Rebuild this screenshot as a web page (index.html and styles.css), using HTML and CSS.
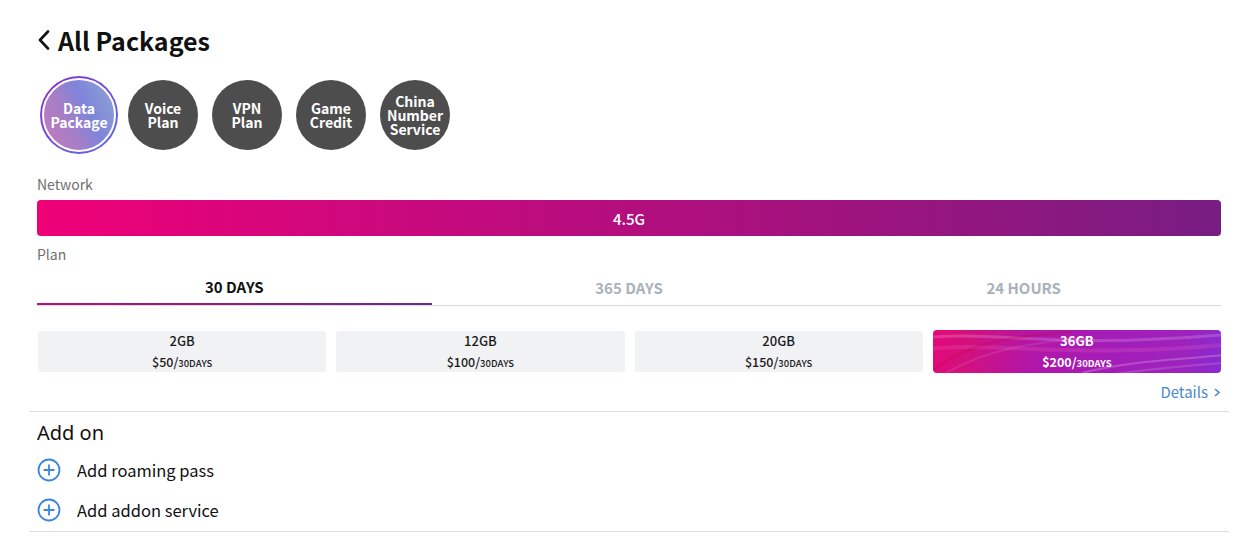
FILE: index.html
```html
<!DOCTYPE html>
<html lang="en">
<head>
<meta charset="utf-8">
<title>All Packages</title>
<link rel="stylesheet" href="styles.css">
</head>
<body>
<div class="page">
  <div class="inner">
    <h1 class="title">
      <svg class="back" width="12" height="20" viewBox="0 0 12 20"><polyline points="10,1.5 2,10 10,18.5" fill="none" stroke="#111" stroke-width="2.6" stroke-linecap="round" stroke-linejoin="round"/></svg>
      <span>All Packages</span>
    </h1>
    <div class="cats">
      <div class="cat active"><div class="cat-in">Data<br>Package</div></div>
      <div class="cat"><div class="cat-in">Voice<br>Plan</div></div>
      <div class="cat"><div class="cat-in">VPN<br>Plan</div></div>
      <div class="cat"><div class="cat-in">Game<br>Credit</div></div>
      <div class="cat"><div class="cat-in">China<br>Number<br>Service</div></div>
    </div>
    <div class="label net-label">Network</div>
    <div class="network">4.5G</div>
    <div class="label plan-label">Plan</div>
    <div class="tabs">
      <div class="tab active">30 DAYS</div>
      <div class="tab">365 DAYS</div>
      <div class="tab">24 HOURS</div>
    </div>
    <div class="plans">
      <div class="plan"><div class="gb">2GB</div><div class="price">$50/<small>30DAYS</small></div></div>
      <div class="plan"><div class="gb">12GB</div><div class="price">$100/<small>30DAYS</small></div></div>
      <div class="plan"><div class="gb">20GB</div><div class="price">$150/<small>30DAYS</small></div></div>
      <div class="plan selected">
        <svg class="waves" viewBox="0 0 290 43" preserveAspectRatio="none">
          <path d="M-10,8 C60,0 120,20 300,4" stroke="rgba(255,255,255,0.18)" stroke-width="3" fill="none"/>
          <path d="M-10,20 C50,10 140,30 300,14" stroke="rgba(255,120,200,0.18)" stroke-width="4" fill="none"/>
          <path d="M0,40 C40,10 90,5 140,2" stroke="rgba(200,0,60,0.25)" stroke-width="3" fill="none"/>
          <path d="M10,45 C50,20 100,12 160,8" stroke="rgba(255,255,255,0.1)" stroke-width="2" fill="none"/>
          <path d="M150,43 C200,30 250,30 300,24" stroke="rgba(255,255,255,0.22)" stroke-width="2" fill="none"/>
          <path d="M170,46 C220,38 260,36 300,32" stroke="rgba(255,255,255,0.15)" stroke-width="2" fill="none"/>
        </svg>
        <div class="gb">36GB</div><div class="price">$200/<small>30DAYS</small></div>
      </div>
    </div>
    <div class="details-row"><a class="details" href="#">Details <svg width="8" height="11" viewBox="0 0 8 11"><polyline points="2,2 6,5.5 2,9" fill="none" stroke="#4a88d0" stroke-width="1.6"/></svg></a></div>
  </div>
  <div class="addon">
    <div class="addon-title">Add on</div>
    <div class="addon-item">
      <svg width="24" height="24" viewBox="0 0 24 24"><circle cx="12" cy="12" r="10.5" fill="none" stroke="#3b86e0" stroke-width="1.8"/><path d="M12 6.5v11M6.5 12h11" stroke="#3b86e0" stroke-width="1.8"/></svg>
      <span>Add roaming pass</span>
    </div>
    <div class="addon-item">
      <svg width="24" height="24" viewBox="0 0 24 24"><circle cx="12" cy="12" r="10.5" fill="none" stroke="#3b86e0" stroke-width="1.8"/><path d="M12 6.5v11M6.5 12h11" stroke="#3b86e0" stroke-width="1.8"/></svg>
      <span>Add addon service</span>
    </div>
  </div>
</div>
</body>
</html>
```
FILE: styles.css
```css
* { box-sizing: border-box; }
html, body { margin: 0; padding: 0; background: #fff; }
body {
  font-family: "Noto Sans CJK SC", "Noto Sans", sans-serif;
  color: #111;
}
.page {
  margin-left: 30px;
  width: 1199px;
}
.inner {
  padding: 0 8px 0 7px;
  border-bottom: 1px solid #dcdcdc;
}
.title {
  margin: 0;
  padding-top: 20px;
  height: 60px;
  display: flex;
  align-items: center;
  font-size: 25px;
  font-weight: 700;
  line-height: 36px;
  color: #111;
}
.back { margin: 0 8px 0 1px; }
.cats {
  display: flex;
  align-items: center;
  gap: 14px;
  padding-left: 3px;
  height: 80px;
  margin-top: 15px;
}
.cat {
  width: 70px;
  height: 70px;
  border-radius: 50%;
  background: #4d4d4d;
  display: flex;
  align-items: center;
  justify-content: center;
}
.cat-in {
  color: #fff;
  font-weight: 700;
  font-size: 14px;
  line-height: 14px;
  text-align: center;
}
.cat.active {
  width: 78px;
  height: 78px;
  margin-right: -4px;
  padding: 2px;
  background: linear-gradient(135deg, #8a2fd0, #5a6ee6);
}
.cat.active .cat-in {
  width: 100%;
  height: 100%;
  border-radius: 50%;
  border: 2px solid #fff;
  display: flex;
  align-items: center;
  justify-content: center;
  background: linear-gradient(65deg, #c47ab8 0%, #a77ec6 35%, #7f84da 60%, #8ea6d2 100%);
}
.label {
  color: #6f6f6f;
  font-size: 14px;
  line-height: 18px;
}
.net-label { margin-top: 20px; }
.network {
  margin-top: 7px;
  height: 36px;
  border-radius: 4px;
  background: linear-gradient(90deg, #ef0077 0%, #c40a7e 35%, #a3127e 65%, #781d82 100%);
  color: #fff;
  font-size: 15px;
  font-weight: 500;
  display: flex;
  align-items: center;
  justify-content: center;
}
.plan-label { margin-top: 9px; }
.tabs {
  margin-top: 8px;
  display: flex;
  border-bottom: 1px solid #dcdcdc;
}
.tab {
  flex: 1;
  height: 34px;
  display: flex;
  align-items: center;
  justify-content: center;
  font-size: 15px;
  font-weight: 700;
  color: #aab1ba;
  padding-bottom: 2px;
}
.tab.active {
  color: #111;
  border-bottom: 2px solid transparent;
  border-image: linear-gradient(90deg, #b0127f, #6b2a8c) 1;
  margin-bottom: -1px;
}
.plans {
  margin-top: 25px;
  display: flex;
  gap: 10px;
  padding-left: 1px;
}
.plan {
  flex: 1;
  height: 41px;
  background: #f1f2f4;
  border-radius: 3px;
  display: flex;
  flex-direction: column;
  align-items: center;
  justify-content: center;
  color: #1a1a1a;
  font-size: 13px;
  line-height: 18px;
  position: relative;
  overflow: hidden;
}
.plan .gb { font-weight: 500; }
.plan .price { font-weight: 500; margin-top: 3px; font-size: 12.5px; }
.plan small { font-size: 9.5px; }
.plan.selected {
  height: 43px;
  margin-top: -1px;
  background: linear-gradient(100deg, #e4087a 0%, #d3107e 12%, #b216a8 35%, #a41cb8 60%, #9e22bd 85%, #8a2ad0 100%);
  color: #fff;
  border-radius: 4px;
}
.plan.selected .gb, .plan.selected .price { font-weight: 700; position: relative; }
.waves {
  position: absolute;
  left: 0; top: 0;
  width: 100%;
  height: 100%;
}
.details-row {
  display: flex;
  justify-content: flex-end;
  height: 38px;
  padding-top: 8px;
}
.details {
  color: #4a88d0;
  font-size: 15px;
  text-decoration: none;
  display: flex;
  align-items: center;
  gap: 5px;
  height: 20px;
}
.details svg { margin-top: 3px; }
.addon {
  padding: 7px 7px 1px 7px;
  border-bottom: 1px solid #dcdcdc;
}
.addon-title {
  font-family: "Noto Sans", sans-serif;
  font-size: 20px;
  line-height: 28px;
  color: #111;
  margin-bottom: 3px;
}
.addon-item {
  display: flex;
  align-items: center;
  height: 40px;
  gap: 16px;
  font-size: 16.5px;
  color: #111;
}
.addon-item svg { flex: none; }
```
